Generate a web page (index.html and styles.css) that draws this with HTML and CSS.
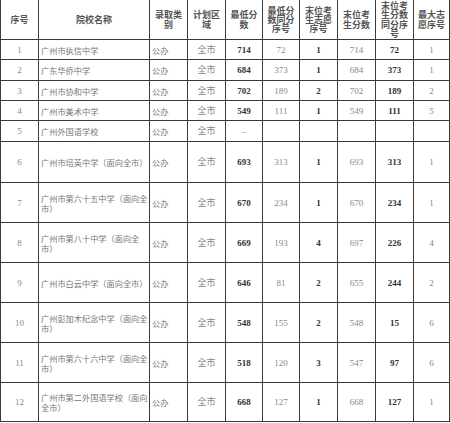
FILE: index.html
```html
<!DOCTYPE html>
<html lang="zh-CN">
<head>
<meta charset="utf-8">
<title>录取分数表</title>
<link rel="stylesheet" href="styles.css">
</head>
<body>
<div class="t">
  <div class="h">序号</div>
  <div class="h">院校名称</div>
  <div class="h">录取类别</div>
  <div class="h">计划区域</div>
  <div class="h">最低分数</div>
  <div class="h">最低分数同分序号</div>
  <div class="h">末位考生志愿序号</div>
  <div class="h">末位考生分数</div>
  <div class="h">末位考生分数同分序号</div>
  <div class="h">最大志愿序号</div>

  <div class="c">1</div><div class="c l">广州市执信中学</div><div class="c l">公办</div><div class="c">全市</div><div class="c b">714</div><div class="c">72</div><div class="c b">1</div><div class="c">714</div><div class="c b">72</div><div class="c">1</div>
  <div class="c">2</div><div class="c l">广东华侨中学</div><div class="c l">公办</div><div class="c">全市</div><div class="c b">684</div><div class="c">373</div><div class="c b">1</div><div class="c">684</div><div class="c b">373</div><div class="c">1</div>
  <div class="c">3</div><div class="c l">广州市协和中学</div><div class="c l">公办</div><div class="c">全市</div><div class="c b">702</div><div class="c">189</div><div class="c b">2</div><div class="c">702</div><div class="c b">189</div><div class="c">2</div>
  <div class="c">4</div><div class="c l">广州市美术中学</div><div class="c l">公办</div><div class="c">全市</div><div class="c b">549</div><div class="c">111</div><div class="c b">1</div><div class="c">549</div><div class="c b">111</div><div class="c">5</div>
  <div class="c">5</div><div class="c l">广州外国语学校</div><div class="c l">公办</div><div class="c">全市</div><div class="c">–</div><div class="c"></div><div class="c"></div><div class="c"></div><div class="c"></div><div class="c"></div>
  <div class="c">6</div><div class="c l">广州市培英中学（面向全市）</div><div class="c l">公办</div><div class="c">全市</div><div class="c b">693</div><div class="c">313</div><div class="c b">1</div><div class="c">693</div><div class="c b">313</div><div class="c">1</div>
  <div class="c">7</div><div class="c l">广州市第六十五中学（面向全市）</div><div class="c l">公办</div><div class="c">全市</div><div class="c b">670</div><div class="c">234</div><div class="c b">1</div><div class="c">670</div><div class="c b">234</div><div class="c">1</div>
  <div class="c">8</div><div class="c l">广州市第八十中学（面向全市）</div><div class="c l">公办</div><div class="c">全市</div><div class="c b">669</div><div class="c">193</div><div class="c b">4</div><div class="c">697</div><div class="c b">226</div><div class="c">4</div>
  <div class="c">9</div><div class="c l">广州市白云中学（面向全市）</div><div class="c l">公办</div><div class="c">全市</div><div class="c b">646</div><div class="c">81</div><div class="c b">2</div><div class="c">655</div><div class="c b">244</div><div class="c">2</div>
  <div class="c">10</div><div class="c l">广州彭加木纪念中学（面向全市）</div><div class="c l">公办</div><div class="c">全市</div><div class="c b">548</div><div class="c">155</div><div class="c b">2</div><div class="c">548</div><div class="c b">15</div><div class="c">6</div>
  <div class="c">11</div><div class="c l">广州市第六十六中学（面向全市）</div><div class="c l">公办</div><div class="c">全市</div><div class="c b">518</div><div class="c">120</div><div class="c b">3</div><div class="c">547</div><div class="c b">97</div><div class="c">6</div>
  <div class="c">12</div><div class="c l">广州市第二外国语学校（面向全市）</div><div class="c l">公办</div><div class="c">全市</div><div class="c b">668</div><div class="c">127</div><div class="c b">1</div><div class="c">668</div><div class="c b">127</div><div class="c">1</div>
</div>
</body>
</html>
```

FILE: styles.css
```css
html, body {
  margin: 0;
  padding: 0;
  background: #fff;
}

.t {
  width: 450px;
  box-sizing: border-box;
  display: grid;
  grid-template-columns: 37px 110px 37px 37px 36px 36px 37px 37px 37px 35px;
  grid-template-rows: 39px 19px 20px 19px 19px 20px 40px 39px 39px 39px 39px 39px 38px;
  gap: 1px;
  padding: 0 1px 1px 1px;
  background: #3a3a3a;
  font-family: "Liberation Serif", "Noto Sans CJK SC", serif;
}

.h {
  background: #fff;
  display: flex;
  align-items: center;
  justify-content: center;
  text-align: center;
  padding: 0 3px;
  font-family: "Noto Sans CJK SC", sans-serif;
  font-size: 9px;
  line-height: 9.3px;
  font-weight: 700;
  color: #555;
}

.c {
  background: #fff;
  display: flex;
  align-items: center;
  justify-content: center;
  text-align: center;
  font-size: 9px;
  line-height: 10px;
  color: #888;
  font-family: "Liberation Serif", "Noto Sans CJK SC", serif;
}

.l {
  justify-content: flex-start;
  text-align: left;
  padding: 0 1px 0 2px;
  font-family: "Noto Sans CJK SC", sans-serif;
  font-size: 8.2px;
  line-height: 10px;
  color: #777;
}

.b {
  font-weight: 700;
  color: #333;
}
```
